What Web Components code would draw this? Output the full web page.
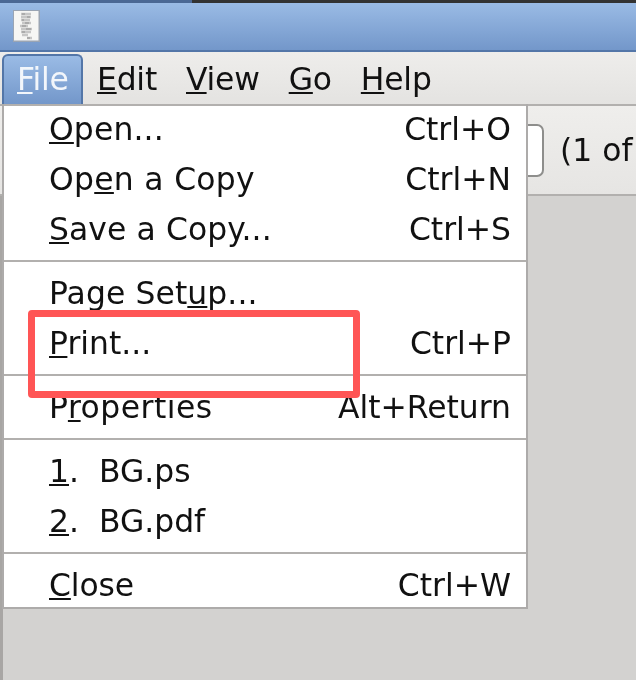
<!DOCTYPE html>
<html>
<head>
<meta charset="utf-8">
<style>
  html, body { margin: 0; padding: 0; height: 680px; overflow: hidden; background: #d3d2d0; }
  body { font-family: "DejaVu Sans", "Liberation Sans", sans-serif; font-size: 31.4px; color: #111; }
</style>
</head>
<body>
<viewer-window>
  <title-bar slot="title"></title-bar>
  <menu-bar slot="menus">
    <menu-button active><u>F</u>ile</menu-button>
    <menu-button><u>E</u>dit</menu-button>
    <menu-button><u>V</u>iew</menu-button>
    <menu-button><u>G</u>o</menu-button>
    <menu-button><u>H</u>elp</menu-button>
  </menu-bar>
  <tool-bar slot="tools">(1 of</tool-bar>
  <drop-menu slot="overlay">
    <menu-item accel="Ctrl+O" style="letter-spacing:.15px"><u>O</u>pen...</menu-item>
    <menu-item accel="Ctrl+N" style="letter-spacing:.3px">Op<u>e</u>n a Copy</menu-item>
    <menu-item accel="Ctrl+S" style="letter-spacing:.1px"><u>S</u>ave a Copy...</menu-item>
    <menu-sep></menu-sep>
    <menu-item style="letter-spacing:.1px">Page Set<u>u</u>p...</menu-item>
    <menu-item accel="Ctrl+P"><u>P</u>rint...</menu-item>
    <menu-sep></menu-sep>
    <menu-item accel="Alt+Return" style="letter-spacing:.5px">P<u>r</u>operties</menu-item>
    <menu-sep></menu-sep>
    <menu-item><u>1</u>.&nbsp;&nbsp;BG.ps</menu-item>
    <menu-item><u>2</u>.&nbsp;&nbsp;BG.pdf</menu-item>
    <menu-sep></menu-sep>
    <menu-item accel="Ctrl+W" style="letter-spacing:-.1px"><u>C</u>lose</menu-item>
  </drop-menu>
  <red-mark slot="overlay"></red-mark>
</viewer-window>

<script>
class ViewerWindow extends HTMLElement {
  constructor() {
    super();
    this.attachShadow({ mode: 'open' }).innerHTML = `
      <style>
        :host { display: block; position: relative; width: 636px; height: 680px; overflow: hidden; background: #d3d2d0; }
        .strip { display: flex; height: 3px; }
        .strip .a { width: 192px; background: #4b6894; }
        .strip .b { flex: 1; background: #333; }
        .side { position: absolute; left: 0; top: 196px; bottom: 0; width: 3px; background: #a8a6a4; }
      </style>
      <div class="strip"><div class="a"></div><div class="b"></div></div>
      <slot name="title"></slot>
      <slot name="menus"></slot>
      <slot name="tools"></slot>
      <div class="side"></div>
      <slot name="overlay"></slot>
    `;
  }
}
customElements.define('viewer-window', ViewerWindow);

class TitleBar extends HTMLElement {
  constructor() {
    super();
    this.attachShadow({ mode: 'open' }).innerHTML = `
      <style>
        :host {
          display: flex; align-items: flex-start; box-sizing: border-box;
          height: 49px; padding: 7px 0 0 13px;
          background: linear-gradient(#9abbe5, #7397ca);
          border-bottom: 2px solid #5376a8;
        }
        svg { display: block; }
      </style>
      <svg width="27" height="32" viewBox="0 0 27 32">
        <rect width="27" height="32" fill="#9aa5b4"/>
        <rect x="1" y="1" width="24.5" height="29.5" fill="#f6f6f4"/>
        <path d="M8 4h10M8 7h10M8 10h9M9 13h9M7 16h8M8 19h11M8 22h10M9 25h6M14 28h5" stroke="#c6c6c6" stroke-width="2.400" fill="none"/>
        <path d="M9 4h3M14 7h3M9 10h2M12 13h4M9 16h4M13 19h5M9 22h3M14 28h3" stroke="#a2a2a2" stroke-width="1.500" fill="none"/>
      </svg>
    `;
  }
}
customElements.define('title-bar', TitleBar);

class MenuBar extends HTMLElement {
  constructor() {
    super();
    this.attachShadow({ mode: 'open' }).innerHTML = `
      <style>
        :host {
          display: flex; align-items: flex-end; box-sizing: border-box;
          height: 52px; padding: 2px 0 0 2px;
          background: linear-gradient(#eeedeb, #e4e3e1);
        }
      </style>
      <slot></slot>
    `;
  }
}
customElements.define('menu-bar', MenuBar);

class MenuButton extends HTMLElement {
  constructor() {
    super();
    this.attachShadow({ mode: 'open' }).innerHTML = `
      <style>
        :host {
          display: block; box-sizing: border-box; height: 50px; line-height: 47px;
          padding: 0 12.5px; border: 2px solid transparent; border-bottom: 0;
          color: #111; letter-spacing: -.2px;
        }
        :host([active]) {
          width: 80.5px; padding: 0 13px; color: #f2f6fb; border-color: #5376a8; border-radius: 6px 6px 0 0;
          background: linear-gradient(#9abbe5, #7397ca);
        }
        span { display: block; filter: blur(0.4px); }
        ::slotted(u) { text-decoration-thickness: 2px; text-underline-offset: 2px; }
      </style>
      <span><slot></slot></span>
    `;
  }
}
customElements.define('menu-button', MenuButton);

class ToolBar extends HTMLElement {
  constructor() {
    super();
    this.attachShadow({ mode: 'open' }).innerHTML = `
      <style>
        :host {
          display: flex; align-items: center; justify-content: flex-end; box-sizing: border-box;
          height: 92px; border-top: 2px solid #b2b0ae; border-bottom: 2px solid #b2b0ae;
          background: linear-gradient(#efeeec, #e6e5e3);
          white-space: nowrap;
        }
        .box {
          width: 40px; height: 53px; box-sizing: border-box; margin: 0 16px 0 0;
          border: 2px solid #8e8e8c; border-radius: 7px; background: #fff;
        }
        .txt { width: 76px; filter: blur(0.4px); }
      </style>
      <div class="box"></div><div class="txt"><slot></slot></div>
    `;
  }
}
customElements.define('tool-bar', ToolBar);

class DropMenu extends HTMLElement {
  constructor() {
    super();
    this.attachShadow({ mode: 'open' }).innerHTML = `
      <style>
        :host {
          position: absolute; left: 2px; top: 104px; width: 526px; height: 505px; box-sizing: border-box;
          display: flex; flex-direction: column;
          background: #fff; border: 2px solid #adabaa; border-top: 0;
          box-shadow: inset 0 2px 0 #b2b0ae;
        }
      </style>
      <slot></slot>
    `;
  }
}
customElements.define('drop-menu', DropMenu);

class MenuItem extends HTMLElement {
  constructor() {
    super();
    this.attachShadow({ mode: 'open' }).innerHTML = `
      <style>
        :host {
          display: flex; flex: none; justify-content: space-between; align-items: center;
          height: 50px; padding: 0 15px 0 45px; white-space: pre; color: #111;
        }
        span { filter: blur(0.4px); }
        .accel { letter-spacing: 0; margin-left: auto; }
        ::slotted(u) { text-decoration-thickness: 2px; text-underline-offset: 2px; }
      </style>
      <span><slot></slot></span><span class="accel"></span>
    `;
  }
  connectedCallback() {
    this.shadowRoot.querySelector('.accel').textContent = this.getAttribute('accel') || '';
  }
}
customElements.define('menu-item', MenuItem);

class MenuSep extends HTMLElement {
  constructor() {
    super();
    this.attachShadow({ mode: 'open' }).innerHTML = `
      <style>
        :host { display: block; flex: none; height: 2px; margin: 6px 0; background: #b2b0ae; }
      </style>
    `;
  }
}
customElements.define('menu-sep', MenuSep);

class RedMark extends HTMLElement {
  constructor() {
    super();
    this.attachShadow({ mode: 'open' }).innerHTML = `
      <style>
        :host {
          position: absolute; left: 28px; top: 310px; width: 332px; height: 88px; box-sizing: border-box;
          border: 7px solid #ff5555; border-radius: 4px;
        }
      </style>
    `;
  }
}
customElements.define('red-mark', RedMark);
</script>
</body>
</html>
